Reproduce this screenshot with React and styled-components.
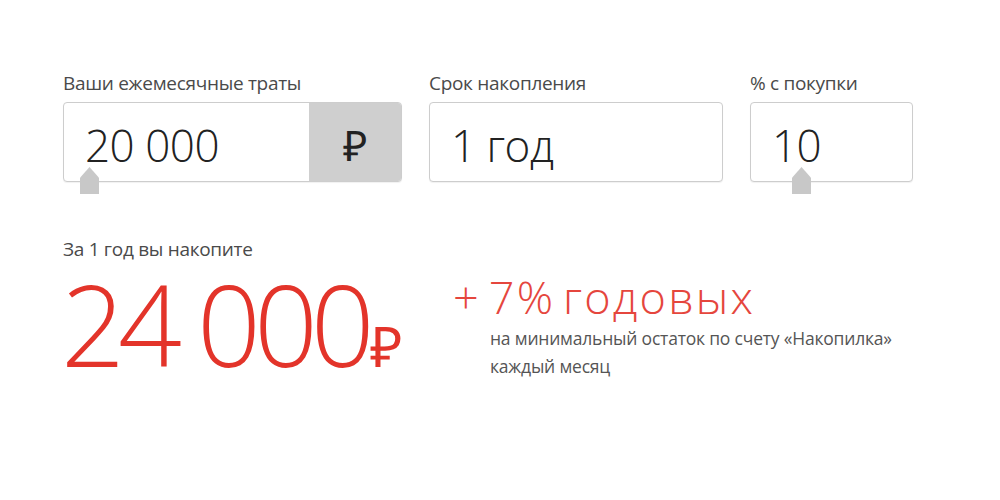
import React from "react";
import styled, { createGlobalStyle } from "styled-components";

const GlobalStyle = createGlobalStyle`
  body {
    margin: 0;
    background: #ffffff;
    font-family: "Open Sans", "Liberation Sans", sans-serif;
    color: #333;
  }
`;

/**
 * Page container
 */
const Page = styled.div`
  width: 1000px;
  height: 500px;
  box-sizing: border-box;
  padding: 70px 0 0 63px;
`;

const FieldsRow = styled.div`
  display: flex;
  gap: 27px;
`;

const Field = styled.div`
  display: flex;
  flex-direction: column;
  width: ${p => p.width}px;
`;

const Label = styled.div`
  font-size: 19px;
  font-weight: 400;
  color: #4a4a4a;
  line-height: 26px;
  margin-bottom: 6px;
  letter-spacing: -0.3px;
`;

const InputBox = styled.div`
  position: relative;
  display: flex;
  height: 80px;
  border: 1px solid #cdcdcd;
  border-radius: 4px;
  box-sizing: border-box;
  box-shadow: 0 1px 1px rgba(0, 0, 0, 0.06);
  background: #fff;
`;

const Value = styled.div`
  flex: 1;
  display: flex;
  align-items: center;
  padding-left: ${p => p.indent || 21}px;
  padding-top: 6px;
  font-size: 44px;
  font-weight: 300;
  color: #222;
  letter-spacing: -0.5px;
`;

const Currency = styled.div`
  width: 92px;
  display: flex;
  align-items: center;
  justify-content: center;
  padding-top: 4px;
  background: #cfcfcf;
  border-radius: 0 3px 3px 0;
  font-size: 42px;
  font-weight: 300;
  color: #222;
`;

const Thumb = styled.div`
  position: absolute;
  left: ${p => p.left}px;
  top: 64px;
  width: 19px;
  height: 27px;
  background: #c8c8c8;
  clip-path: polygon(50% 0, 100% 40%, 100% 100%, 0 100%, 0 40%);
`;

const Result = styled.div`
  margin-top: 54px;
`;

const ResultRow = styled.div`
  display: flex;
  align-items: flex-start;
`;

const Total = styled.div`
  display: flex;
  align-items: baseline;
  color: #e3342a;
  font-weight: 300;
  font-size: 112px;
  line-height: 112px;
  letter-spacing: -7px;
  margin-left: -2px;
  width: 392px;
  white-space: nowrap;
`;

const Rub = styled.span`
  font-size: 56px;
  margin-left: 2px;
  letter-spacing: 0;
`;

const Bonus = styled.div`
  display: flex;
  flex-direction: column;
  margin-top: 4px;
`;

const Rate = styled.div`
  color: #e5463d;
  font-weight: 300;
  font-size: 45px;
  line-height: 50px;
  letter-spacing: 2.2px;
  word-spacing: -6px;
`;

const Note = styled.div`
  margin-left: 37px;
  margin-top: 2px;
  font-size: 17.5px;
  line-height: 28px;
  color: #555;
  letter-spacing: -0.2px;
`;

const App = () => {
  return (
    <>
      <GlobalStyle />
      <Page>
        <FieldsRow>
          <Field width={339}>
            <Label>Ваши ежемесячные траты</Label>
            <InputBox>
              <Value>20 000</Value>
              <Currency>₽</Currency>
              <Thumb left={16} />
            </InputBox>
          </Field>
          <Field width={294}>
            <Label>Срок накопления</Label>
            <InputBox>
              <Value>1 год</Value>
            </InputBox>
          </Field>
          <Field width={163}>
            <Label>% с покупки</Label>
            <InputBox>
              <Value>10</Value>
              <Thumb left={41} />
            </InputBox>
          </Field>
        </FieldsRow>
        <Result>
          <Label>За 1 год вы накопите</Label>
          <ResultRow>
            <Total>
              24 000<Rub>₽</Rub>
            </Total>
            <Bonus>
              <Rate>+ 7% годовых</Rate>
              <Note>
                на минимальный остаток по счету «Накопилка»
                <br />
                каждый месяц
              </Note>
            </Bonus>
          </ResultRow>
        </Result>
      </Page>
    </>
  );
};

export default App;
